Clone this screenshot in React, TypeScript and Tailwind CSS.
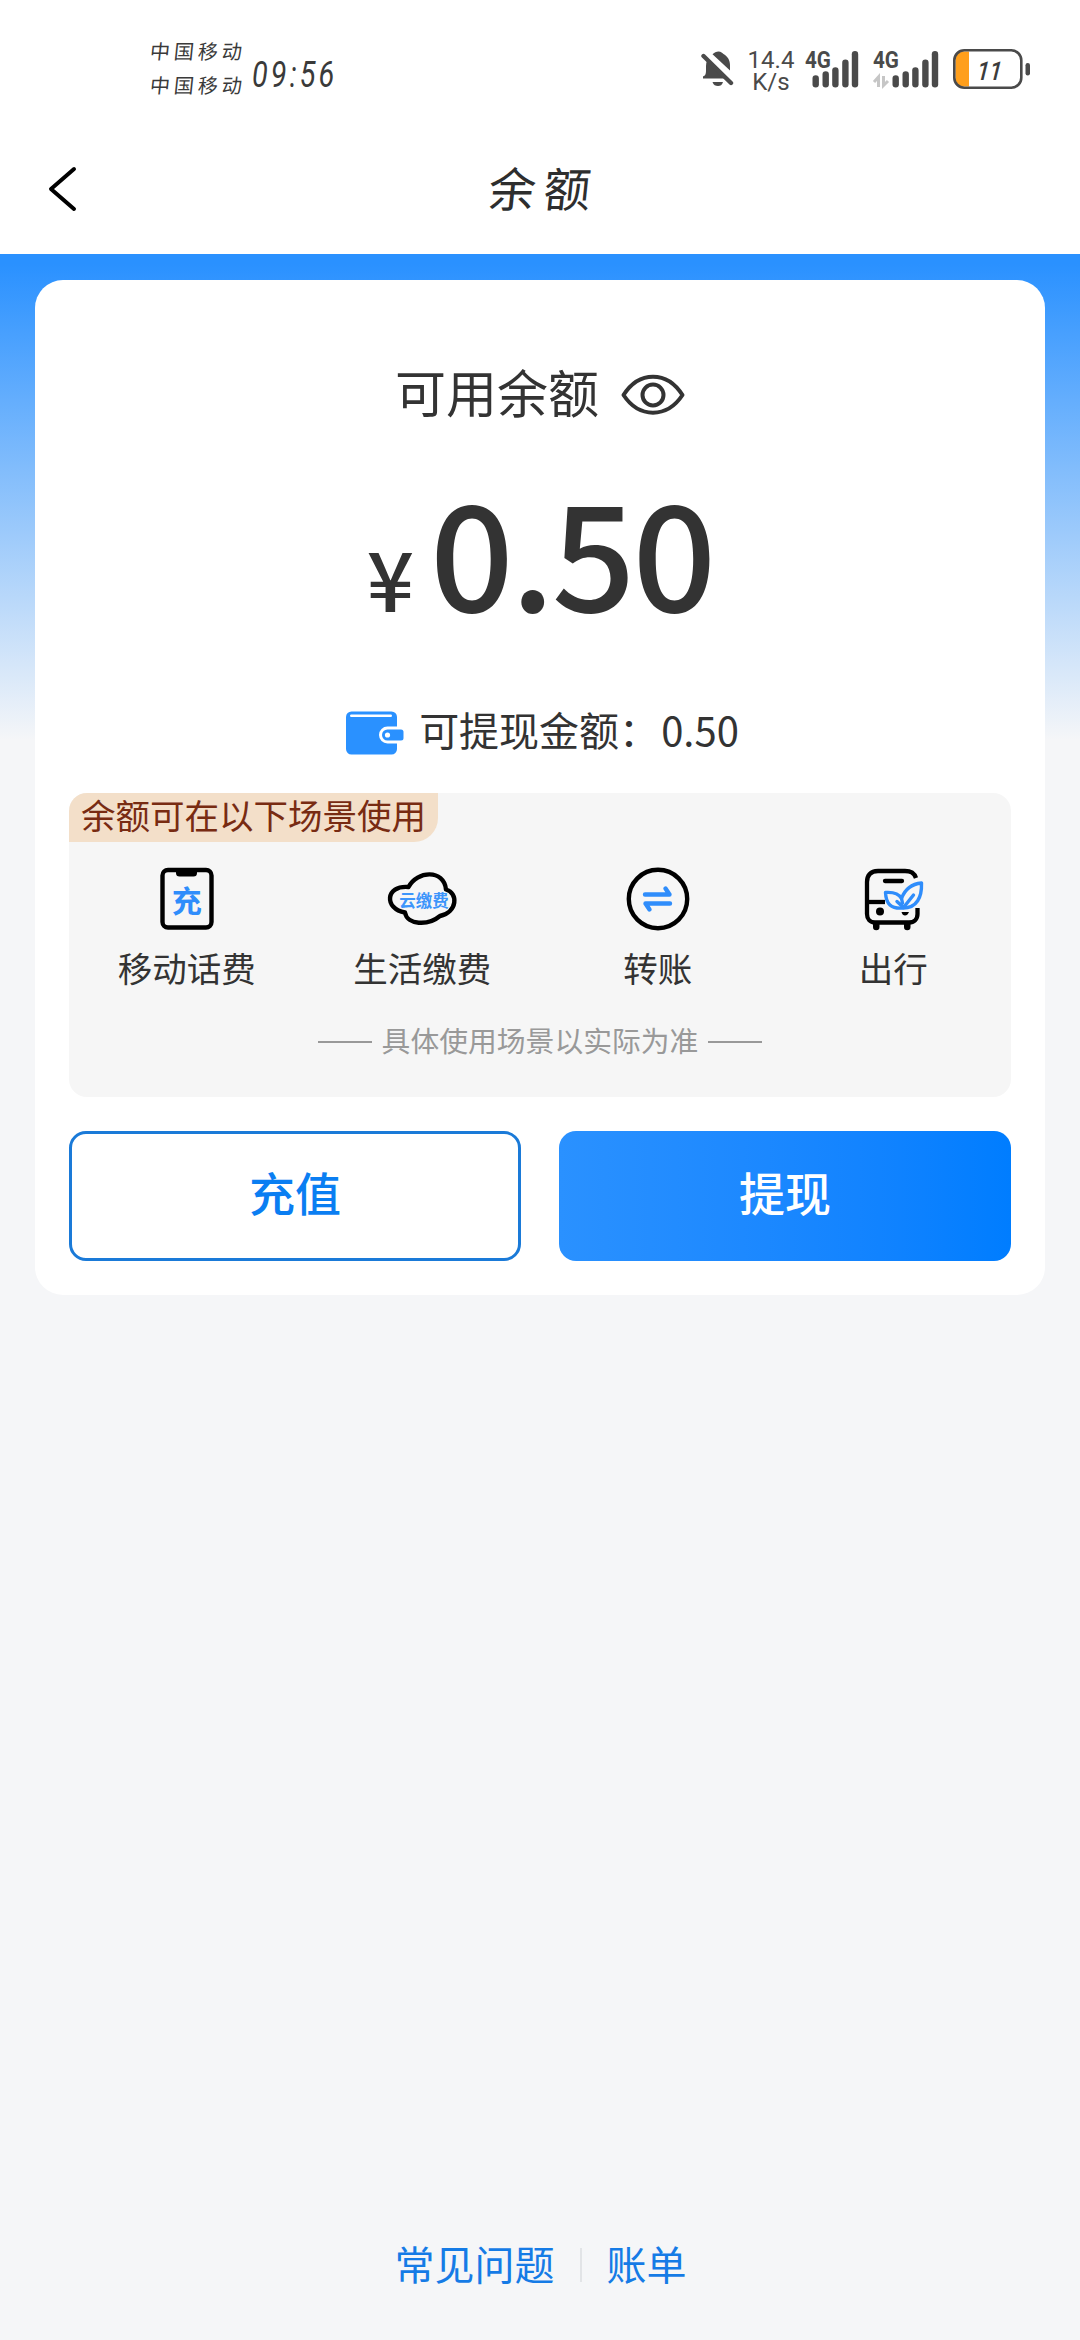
import type { ReactNode } from "react";

function BellOff() {
  return (
    <svg width="34" height="40" viewBox="0 0 34 40" fill="none">
      <path d="M4.5 29.5 H2 V27.5 C4.5 26.5 5 25 5 21 V17 C5 15 5.4 13.3 6.2 11.6 L24 29.5 Z" fill="#4a4a4a" />
      <path d="M11.5 5.2 C13 3.8 15.5 2.4 17.5 2.4 C20 2.4 21.5 4 22.5 5 C27 7.5 29 11.5 29 16 V21.5 Z" fill="#4a4a4a" />
      <path d="M11.5 33 H22 C21 36 19.5 37 17 37 C14.5 37 12.5 36 11.5 33 Z" fill="#4a4a4a" />
      <path d="M2.5 7 L30 34" stroke="#4a4a4a" strokeWidth="4.4" strokeLinecap="round" />
    </svg>
  );
}

const bars = [
  { x: 9.5, top: 26.2 },
  { x: 19.5, top: 22.2 },
  { x: 29.2, top: 18.2 },
  { x: 39.2, top: 10.5 },
  { x: 48.8, top: 2 },
];

function Signal({ data = false }: { data?: boolean }) {
  const shift = data ? 13 : 0;
  return (
    <div className={data ? "relative h-[40px] w-[68px]" : "relative h-[40px] w-[62px]"}>
      <svg className="absolute left-0 top-0 overflow-visible" width="68" height="40" viewBox="0 0 68 40">
        {bars.map(({ x, top }) => (
          <rect key={x} x={x + shift} y={top} width="6.4" height={38.5 - top} rx="3.2" fill="#4a4a4a" />
        ))}
        {data && (
          <g stroke="#c6c6c6" strokeWidth="3" fill="none">
            <path d="M8.5 38 V28 L4 33" />
            <path d="M13.5 27 V36.5 L18 32" />
          </g>
        )}
      </svg>
      <span
        className={
          data
            ? "absolute left-[3px] top-[1px] origin-left scale-x-[.86] font-[Roboto] text-[24px] font-bold leading-[20px] text-[#4a4a4a]"
            : "absolute left-[2px] top-[1px] origin-left scale-x-[.86] font-[Roboto] text-[24px] font-bold leading-[20px] text-[#4a4a4a]"
        }
      >
        4G
      </span>
    </div>
  );
}

function Battery() {
  return (
    <div className="relative h-[40px] w-[78px]">
      <svg width="78" height="40" viewBox="0 0 78 40" fill="none">
        <path d="M16 2.5 H10 A8 8 0 0 0 2.5 10 V30 A8 8 0 0 0 10 37.5 H16 Z" fill="#ff9f1c" />
        <rect x="1.3" y="1.3" width="67" height="37.4" rx="10" stroke="#4a4a4a" strokeWidth="2.6" />
        <rect x="72.5" y="14" width="4.5" height="12.5" rx="2.2" fill="#4a4a4a" />
      </svg>
      <span className="absolute left-[24px] top-[10px] origin-left scale-x-[.88] -skew-x-6 font-[Roboto] text-[26px] font-medium italic leading-[24px] text-[#3c3c3c]">
        11
      </span>
    </div>
  );
}

function StatusBar() {
  return (
    <div className="flex h-[138px] items-start text-[#3a3a3a]">
      <div className="ml-[150px] mt-[34px] w-[100px] text-[20px] leading-[34px] tracking-[4px]">
        <div className="-skew-x-6">中国移动</div>
        <div className="-skew-x-6">中国移动</div>
      </div>
      <div className="ml-[2px] mt-[55px] w-[90px] origin-left scale-x-[.78] whitespace-nowrap font-[Roboto] text-[37px] italic leading-[40px] tracking-[4px]">
        09:56
      </div>
      <div className="ml-[359px] mt-[49px] flex items-start">
        <BellOff />
        <div className="ml-[12px] w-[48px] text-center font-[Roboto] text-[24px] leading-[22px] text-[#4a4a4a]">
          14.4
          <br />
          K/s
        </div>
        <div className="ml-[8px]">
          <Signal />
        </div>
        <div className="ml-[5px]">
          <Signal data />
        </div>
        <div className="ml-[15px]">
          <Battery />
        </div>
      </div>
    </div>
  );
}

function TitleBar() {
  return (
    <div className="grid h-[116px] grid-cols-[120px_1fr_120px] items-start">
      <svg className="ml-[46px] mt-[26px]" width="34" height="50" viewBox="0 0 34 50" fill="none">
        <path d="M28 5 L5 25 L28 45" stroke="#000" strokeWidth="4" strokeLinecap="round" strokeLinejoin="round" />
      </svg>
      <h1 className="mt-[19px] -skew-x-6 pl-[8px] text-center text-[47px] leading-[60px] tracking-[8px] text-[#2e2e2e]">
        余额
      </h1>
    </div>
  );
}

function Eye() {
  return (
    <svg width="64" height="42" viewBox="0 0 64 42" fill="none" stroke="#333" strokeWidth="4">
      <path d="M2.5 21 C18 -3.5 46 -3.5 61.5 21 C46 44.5 18 44.5 2.5 21 Z" strokeLinejoin="round" />
      <circle cx="32" cy="21" r="10.5" />
    </svg>
  );
}

function Wallet() {
  return (
    <svg width="60" height="46" viewBox="0 0 60 46">
      <rect x="1" y="1.5" width="51" height="43" rx="5.5" fill="#2a91ff" />
      <rect x="5" y="4.5" width="42" height="2.4" rx="1.2" fill="#fff" />
      <rect x="34" y="16.5" width="30" height="17" rx="8.5" fill="#fff" />
      <path d="M42.5 19.5 H56 Q58.5 19.5 58.5 22 V28 Q58.5 30.5 56 30.5 H42.5 A5.5 5.5 0 0 1 42.5 19.5 Z" fill="#2a91ff" />
      <circle cx="42.5" cy="25" r="2.6" fill="#fff" />
    </svg>
  );
}

function PhoneIcon() {
  return (
    <div className="relative h-[64px] w-[56px]">
      <svg width="56" height="64" viewBox="0 0 56 64" fill="none">
        <rect x="3.5" y="3" width="49" height="57.5" rx="5.5" stroke="#000" strokeWidth="4.4" />
        <path d="M17 3 H38 V6 Q38 9.5 34.5 9.5 H20.5 Q17 9.5 17 6 Z" fill="#000" />
      </svg>
      <span className="absolute inset-x-0 top-[15px] text-center text-[30px] font-bold leading-[34px] text-[#2f8dfb]">充</span>
    </div>
  );
}

function CloudIcon() {
  return (
    <div className="relative h-[64px] w-[72px]">
      <svg className="overflow-visible" width="72" height="64" viewBox="0 0 72 64" fill="none">
        <path
          d="M22.500 20 C31 3.500 58 2 60 22.500 C72.500 26 71.500 45 54 49 C42 59 21 58 19 45.500 C-2 42 -1 18 22.500 20 Z"
          stroke="#000"
          strokeWidth="4.400"
          strokeLinejoin="round"
        />
      </svg>
      <span className="absolute left-[13px] top-[23px] whitespace-nowrap text-[16.500px] font-bold leading-[20px] text-[#3d95fb]">
        云缴费
      </span>
    </div>
  );
}

function TransferIcon() {
  return (
    <svg width="64" height="64" viewBox="0 0 64 64" fill="none">
      <circle cx="32" cy="32" r="29.2" stroke="#000" strokeWidth="4.4" />
      <g stroke="#2f8dfb" strokeWidth="4.4" strokeLinecap="round" strokeLinejoin="round">
        <path d="M19 27.5 H43.5 L39.5 21.5" />
        <path d="M44 36.5 H19.5 L23.5 42.5" />
      </g>
    </svg>
  );
}

function BusIcon() {
  return (
    <svg width="64" height="64" viewBox="0 0 64 64" fill="none">
      <g stroke="#000" strokeWidth="4.3" strokeLinecap="round">
        <path d="M55 11 C53 5 49 4 44 4 H17 C9 4 6 9 6 15 V47 C6 52 9 55.5 14 55.5 H48 C53 55.5 56.5 52 56.5 47 V41" strokeLinecap="butt" />
        <path d="M24 14 H41" />
        <path d="M6 35 H24" strokeLinecap="butt" />
      </g>
      <path d="M12 56 H18.5 V60 A3.2 3.2 0 0 1 12 60 Z M43 56 H49.5 V60 A3.2 3.2 0 0 1 43 60 Z" fill="#000" />
      <circle cx="19" cy="44.5" r="4" fill="#000" />
      <path d="M40.5 45 H48 Q46.5 48.5 44 48.5 Q41.5 48.5 40.5 45 Z" fill="#000" />
      <g stroke="#2f8dfb" strokeWidth="3.4" strokeLinejoin="round" strokeLinecap="round">
        <path d="M42 41 C30 42 25 37 24.5 25.500 C32 25 38 27 40.500 31.500 C44 22 50 17 60.500 16 C61 30 56 41 42 41 Z" />
        <path d="M40.500 31.500 L41.500 36 M42.500 40.500 L52.500 28 M36 34.500 L42.500 40.500" />
      </g>
    </svg>
  );
}

function Scene({ icon, label }: { icon: ReactNode; label: string }) {
  return (
    <div className="flex flex-col items-center">
      <div className="flex h-[64px] items-center">{icon}</div>
      <div className="mt-[11px] text-[34.5px] leading-[50px] text-[#333]">{label}</div>
    </div>
  );
}

export default function App() {
  return (
    <div className="flex h-[2340px] w-[1080px] flex-col overflow-hidden bg-[#f5f6f8] font-['Noto_Sans_CJK_SC',sans-serif]">
      <header className="bg-white">
        <StatusBar />
        <TitleBar />
      </header>
      <main className="flex-1 bg-[linear-gradient(180deg,#2a91ff_0px,#2a91ff_10px,#f5f6f8_486px)] px-[35px] pt-[26px]">
        <section className="flex h-[1015px] flex-col rounded-[28px] bg-white px-[34px]">
          <div className="mt-[79px] flex h-[64px] items-center justify-center">
            <span className="text-[51px] leading-[64px] text-[#333]">可用余额</span>
            <span className="ml-[22px] mt-[8px]">
              <Eye />
            </span>
          </div>
          <div className="mt-[35px] flex h-[180px] items-baseline justify-center font-medium leading-[180px] text-[#333]">
            <span className="text-[83px]">¥</span>
            <span className="ml-[16px] text-[147px] leading-[180px] tracking-[-3px]">0.50</span>
          </div>
          <div className="mt-[61px] flex h-[60px] items-center justify-center pl-[4px] text-[40px] leading-[60px] text-[#333]">
            <span className="pt-[8px]">
              <Wallet />
            </span>
            <span className="ml-[14px]">可提现金额：</span>
            <span className="ml-[2px]">0.50</span>
          </div>
          <div className="mt-[34px] flex h-[304px] flex-col rounded-[18px] bg-[#f6f6f6]">
            <div className="flex h-[49px] w-[369px] items-center justify-center whitespace-nowrap rounded-br-[24px] rounded-tl-[18px] bg-[#f3dfc9] pb-[7px] text-[34.5px] leading-[42px] text-[#782b12]">
              余额可在以下场景使用
            </div>
            <div className="mt-[25px] grid grid-cols-4">
              <Scene icon={<PhoneIcon />} label="移动话费" />
              <Scene icon={<CloudIcon />} label="生活缴费" />
              <Scene icon={<TransferIcon />} label="转账" />
              <Scene icon={<BusIcon />} label="出行" />
            </div>
            <div className="mt-[28px] flex h-[40px] items-center justify-center gap-[10px] text-[28.8px] leading-[40px] text-[#999]">
              <span className="mt-[3px] h-[2px] w-[54px] bg-[#999]" />
              <span>具体使用场景以实际为准</span>
              <span className="mt-[3px] h-[2px] w-[54px] bg-[#999]" />
            </div>
          </div>
          <div className="mt-[34px] grid grid-cols-2 gap-[38px] text-[46px] font-medium leading-[60px]">
            <button className="h-[130px] rounded-[17px] border-[3px] border-[#1a7ad8] pb-[10px] text-[#0a7ef2]">充值</button>
            <button className="h-[130px] rounded-[17px] bg-linear-to-r from-[#2a91ff] to-[#007dff] pb-[10px] text-white">提现</button>
          </div>
        </section>
      </main>
      <footer className="flex h-[107px] items-start justify-center pl-px text-[40px] leading-[60px] text-[#157be6]">
        <span>常见问题</span>
        <span className="mx-[25px] mt-[15px] h-[34px] w-[2px] bg-[#e2e4e7]" />
        <span>账单</span>
      </footer>
    </div>
  );
}
